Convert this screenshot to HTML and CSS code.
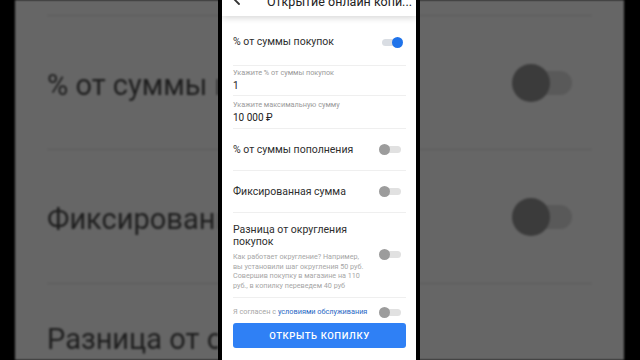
FILE: index.html
```html
<!DOCTYPE html>
<html lang="ru">
<head>
<meta charset="utf-8">
<title>Открытие онлайн копилки</title>
<link rel="stylesheet" href="styles.css">
</head>
<body>
<div class="screen">
  <div class="backdrop">
    <div class="bg-top"></div>
    <div class="bg-sep"></div>
    <div class="bg-row bg-row-1">
      <span class="bg-text">% от суммы пополнения</span>
      <span class="bg-toggle"><span class="bg-track"></span><span class="bg-knob"></span></span>
    </div>
    <div class="bg-sep"></div>
    <div class="bg-row">
      <span class="bg-text">Фиксированная сумма</span>
      <span class="bg-toggle"><span class="bg-track"></span><span class="bg-knob"></span></span>
    </div>
    <div class="bg-sep"></div>
    <div class="bg-row bg-row-3">
      <span class="bg-text">Разница от округления</span>
    </div>
  </div>

  <div class="phone">
    <div class="header">
      <svg class="back" width="14" height="14" viewBox="0 0 14 14"><path d="M7 1 L1 7 L7 13 M1 7 H13" fill="none" stroke="#333" stroke-width="1.8" stroke-linecap="round" stroke-linejoin="round"/></svg>
      <span class="title">Открытие онлайн копи...</span>
    </div>

    <div class="row row-first">
      <span class="row-text">% от суммы покупок</span>
      <span class="toggle on"><span class="track"></span><span class="knob"></span></span>
    </div>
    <div class="sep"></div>
    <div class="field field-1">
      <span class="label">Укажите % от суммы покупок</span>
      <span class="value">1</span>
    </div>
    <div class="sep"></div>
    <div class="field field-2">
      <span class="label">Укажите максимальную сумму</span>
      <span class="value">10 000 ₽</span>
    </div>
    <div class="sep"></div>
    <div class="row">
      <span class="row-text">% от суммы пополнения</span>
      <span class="toggle"><span class="track"></span><span class="knob"></span></span>
    </div>
    <div class="sep"></div>
    <div class="row">
      <span class="row-text">Фиксированная сумма</span>
      <span class="toggle"><span class="track"></span><span class="knob"></span></span>
    </div>
    <div class="sep"></div>
    <div class="round">
      <div class="round-text">
        <div class="row-text round-title">Разница от округления<br>покупок</div>
        <div class="desc">Как работает округление? Например,<br>вы установили шаг округления 50 руб.<br>Совершив покупку в магазине на 110<br>руб., в копилку переведем 40 руб</div>
      </div>
      <span class="toggle round-toggle"><span class="track"></span><span class="knob"></span></span>
    </div>
    <div class="sep"></div>
    <div class="consent">
      <span class="consent-text">Я согласен с <span class="link">условиями обслуживания</span></span>
      <span class="toggle"><span class="track"></span><span class="knob"></span></span>
    </div>
    <div class="button">ОТКРЫТЬ КОПИЛКУ</div>
  </div>
</div>
</body>
</html>
```

FILE: styles.css
```css
* { box-sizing: border-box; }
html, body { margin: 0; padding: 0; background: #000; }
body { width: 640px; height: 360px; overflow: hidden; font-family: Roboto, "Noto Sans", sans-serif; }

.screen {
  display: grid;
  width: 640px;
  height: 360px;
  background: #000;
}
.backdrop, .phone { grid-area: 1 / 1; }

/* blurred enlarged backdrop */
.backdrop {
  margin-left: 15px;
  width: 609px;
  height: 360px;
  background: #666;
  overflow: hidden;
  display: flex;
  flex-direction: column;
  filter: blur(1.2px);
  position: relative;
  z-index: 0;
}
.bg-top { height: 15px; flex: none; }
.bg-sep { height: 1px; background: #5b5b5b; margin: 0 32px; flex: none; }
.bg-row {
  height: 133px;
  flex: none;
  display: flex;
  align-items: center;
  justify-content: space-between;
  padding: 0 52px 0 32px;
  font-size: 29px;
  line-height: 40px;
  color: #1e1e1e;
  white-space: nowrap;
}
.bg-text { padding-top: 4px; max-width: 171px; overflow: hidden; }
.bg-row-3 { align-items: flex-start; padding-top: 31px; }
.bg-toggle { position: relative; width: 60px; height: 38px; flex: none; }
.bg-track { position: absolute; left: 10px; right: 0; top: 7px; height: 24px; border-radius: 12px; background: #595959; }
.bg-knob { position: absolute; left: 0; top: 0; width: 38px; height: 38px; border-radius: 50%; background: #3b3b3b; }

/* phone */
.phone {
  margin-left: 218px;
  width: 202px;
  height: 360px;
  border-left: 4px solid #000;
  border-right: 4px solid #000;
  background: #fff;
  display: flex;
  flex-direction: column;
  overflow: hidden;
  position: relative;
  z-index: 1;
}
.header {
  height: 16px;
  flex: none;
  display: flex;
  align-items: flex-start;
  padding-left: 10px;
  box-shadow: 0 2px 6px rgba(0,0,0,0.16);
  position: relative;
  z-index: 1;
}
.back { margin-top: -9px; flex: none; }
.title {
  margin-left: 21px;
  margin-top: -7px;
  font-size: 12.5px;
  line-height: 18px;
  color: #222;
  white-space: nowrap;
}

.sep { height: 1px; background: #efefef; margin: 0 10px 0 11px; flex: none; }

.row {
  height: 41px;
  flex: none;
  display: flex;
  align-items: center;
  justify-content: space-between;
  padding: 0 13px 0 11px;
}
.row-first { height: 49px; padding-top: 3px; }
.row-text { font-size: 10.5px; line-height: 12px; color: #2e2e2e; }

.toggle { position: relative; width: 24px; height: 11px; flex: none; }
.track { position: absolute; left: 3px; right: 2px; top: 2px; height: 7px; border-radius: 4px; background: #e1e1e1; }
.knob { position: absolute; left: 0; top: 0; width: 11px; height: 11px; border-radius: 50%; background: #9c9c9c; }
.toggle.on .track { background: #d9dde3; }
.toggle.on .knob { left: auto; right: 0; background: #1f73ea; }

.field { flex: none; display: flex; flex-direction: column; padding: 0 10px 0 11px; }
.field-1 { height: 29px; padding-top: 2px; }
.field-2 { height: 32px; padding-top: 4px; }
.label { font-size: 7.3px; line-height: 9px; color: #9a9a9a; }
.value { margin-top: 2.5px; font-size: 10px; line-height: 11.5px; color: #222; }

.round {
  height: 84px;
  flex: none;
  display: flex;
  justify-content: space-between;
  padding: 10.5px 13px 0 11px;
}
.round-title { line-height: 12.5px; }
.desc { margin-top: 3.5px; font-size: 7.2px; line-height: 9.6px; color: #a6a6a6; white-space: nowrap; }
.round-toggle { margin-top: 25px; }

.consent {
  flex: none;
  display: flex;
  align-items: center;
  justify-content: space-between;
  padding: 9px 13px 0 11px;
  height: 19px;
}
.consent-text { font-size: 7.3px; line-height: 10px; color: #a6a6a6; white-space: nowrap; }
.link { color: #2767c4; }

.button {
  flex: none;
  margin: 6px 10px 0 11px;
  height: 25px;
  border-radius: 3px;
  background: #2f80f5;
  color: #fff;
  font-size: 9.5px;
  font-weight: 500;
  letter-spacing: 0.6px;
  display: flex;
  align-items: center;
  justify-content: center;
}
```
